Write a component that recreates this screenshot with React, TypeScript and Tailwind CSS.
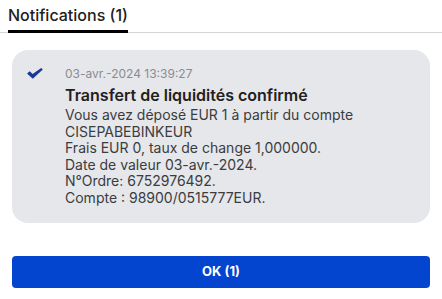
export default function App() {
  return (
    <div
      className="h-[299px] w-[442px] bg-white text-[#1f2022]"
      style={{ fontFamily: "Inter, 'Liberation Sans', sans-serif" }}
    >
      {/* ─── Tabs ─── */}
      <div className="flex border-b border-[#d4d5d8] px-2 pt-[5px]">
        <div className="-mb-px border-b-[3px] border-black pb-[5px] text-[16px] font-medium leading-[20px]">
          Notifications (1)
        </div>
      </div>

      {/* ─── Card ─── */}
      <div className="mx-3 mt-[17px] flex rounded-[16px] bg-[#e6e7ea] pb-[16px] pt-[16px]">
        <div className="w-[53px] shrink-0 pl-[15px] pt-[2px]">
          <CheckMark />
        </div>
        <div className="min-w-0 flex-1">
          <div className="text-[12px] leading-[16px] text-[#8a8c90]">
            03-avr.-2024 13:39:27
          </div>
          <div className="mt-[3px] text-[16px] font-semibold leading-[20px]">
            Transfert de liquidités confirmé
          </div>
          <div className="mt-[2px] text-[14px] leading-[16.6px] text-[#3a3c40]">
            <div>Vous avez déposé EUR 1 à partir du compte</div>
            <div>CISEPABEBINKEUR</div>
            <div>Frais EUR 0, taux de change 1,000000.</div>
            <div>Date de valeur 03-avr.-2024.</div>
            <div>N°Ordre: 6752976492.</div>
            <div>Compte : 98900/0515777EUR.</div>
          </div>
        </div>
      </div>

      {/* ─── Action ─── */}
      <div className="mx-3 mt-[33px]">
        <button className="flex h-[32px] w-full items-center justify-center rounded-[4px] bg-[#0345cf] text-[13px] font-bold text-white">
          OK (1)
        </button>
      </div>
    </div>
  );
}

function CheckMark() {
  return (
    <svg width="16" height="11" viewBox="0 0 16 11" className="block">
      <path
        d="M0 5.6 L2.8 3.2 L5.6 5.9 L14.2 0 L15.8 1.4 L5.8 10.8 Z"
        fill="#1a3896"
      />
    </svg>
  );
}
